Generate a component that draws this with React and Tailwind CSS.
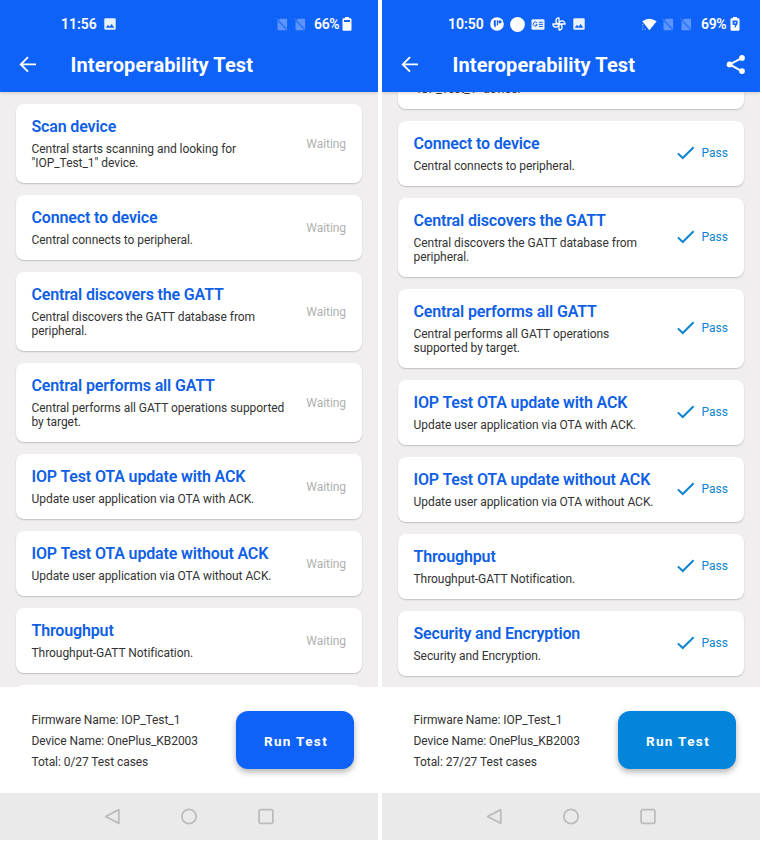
const steps = [
  ["Scan device", 'Central starts scanning and looking for "IOP_Test_1" device.'],
  ["Connect to device", "Central connects to peripheral."],
  ["Central discovers the GATT", "Central discovers the GATT database from peripheral."],
  ["Central performs all GATT", "Central performs all GATT operations supported by target."],
  ["IOP Test OTA update with ACK", "Update user application via OTA with ACK."],
  ["IOP Test OTA update without ACK", "Update user application via OTA without ACK."],
  ["Throughput", "Throughput-GATT Notification."],
  ["Security and Encryption", "Security and Encryption."],
];

function Photo({ className = "" }) {
  return (
    <svg className={"h-3 w-3 shrink-0 " + className} viewBox="0 0 12 12">
      <rect x="0.3" y="0.3" width="11.4" height="11.4" rx="1.2" fill="#e9f1ff" />
      <path d="M1.8 9.7 4 6.8l1.6 1.9L7.6 6l2.7 3.7z" fill="#0f62f7" />
    </svg>
  );
}

function NoSim({ className = "" }) {
  return (
    <svg className={"h-[13px] w-3 shrink-0 " + className} viewBox="0 0 12 13">
      <path d="M4.2.7h6.2q.7 0 .7.7v9.4L2.7 2zM1.5 3l8.9 9.3H2.2q-.7 0-.7-.7z" fill="#5c95fc" />
      <path d="M.4.6 11.6 12.4" stroke="#5c95fc" strokeWidth="0.8" />
    </svg>
  );
}

function Battery({ charging }) {
  return (
    <svg className="h-[14px] w-[10px] shrink-0" viewBox="0 0 10 14">
      <path d="M3 0h4v1.3h1.3q1.2 0 1.2 1.2v10q0 1.2-1.2 1.2H1.7Q.5 13.7.5 12.5v-10q0-1.2 1.2-1.2H3z" fill="#fff" />
      {charging ? (
        <path d="M2.4 3.6h5.2v3.2L4.8 11.5V8H2.7zM4.4 5v1.5h1.3V5z" fill="#0f62f7" fillRule="evenodd" />
      ) : (
        <path d="M2 3h6v2H2z" fill="#0f62f7" />
      )}
    </svg>
  );
}

function LeftStatus() {
  return (
    <div className="flex h-[47px] items-center pt-px pl-[61px] text-[14px] font-semibold text-white">
      <span className="w-[43px]">11:56</span>
      <Photo />
      <NoSim className="ml-[160px]" />
      <NoSim className="ml-[6px]" />
      <span className="ml-[8px] w-[28px] tracking-[-0.35px]">66%</span>
      <Battery />
    </div>
  );
}

function RightStatus() {
  return (
    <div className="flex h-[47px] items-center pt-px pl-[66px] text-[14px] font-semibold text-white">
      <span className="w-[42px]">10:50</span>
      <svg className="h-[14px] w-[14px] shrink-0" viewBox="0 0 14 14">
        <circle cx="7" cy="7" r="6.8" fill="#fff" />
        <path d="M3.8 3.2h2v7.3q-2-.6-2-3zM6.8 3.2h1.4v4.4q0 .9-1.4 1.1z" fill="#0f62f7" />
        <circle cx="10" cy="4.8" r="1.6" fill="#0f62f7" />
      </svg>
      <svg className="ml-[6px] h-[15px] w-[15px] shrink-0" viewBox="0 0 15 15">
        <circle cx="7.5" cy="7.5" r="7.4" fill="#fff" />
      </svg>
      <svg className="ml-[6px] h-[11px] w-[14px] shrink-0" viewBox="0 0 14 11">
        <rect x="0.5" y="0.3" width="13" height="10.4" rx="1.2" fill="#e9f1ff" />
        <path d="M6 4A2 2 0 1 0 6.2 5.7H4.7M8 3.3h3.8M8 5.4h3.8M8 7.5h3.8" fill="none" stroke="#0f62f7" strokeWidth="1" />
      </svg>
      <svg className="ml-[7px] h-[14px] w-[14px] shrink-0" viewBox="0 0 14 14" fill="none" stroke="#fff" strokeWidth="1.3" strokeLinejoin="round">
        <path d="M7 7V.9a3.05 3.05 0 0 0 0 6.1M7 7h6.1A3.05 3.05 0 0 0 7 7M7 7v6.1A3.05 3.05 0 0 0 7 7M7 7H.9A3.05 3.05 0 0 0 7 7" />
      </svg>
      <Photo className="ml-[7px]" />
      <svg className="ml-[55px] h-[13px] w-[17px] shrink-0" viewBox="0 0 17 13">
        <path d="M2.2 3.3Q9.4-2 16.6 3.3L9.4 12.2z" fill="#fff" />
        <path d="M2 6.5h1.3M2 9h1.3M2 11.3h1.3M4.5 11.3h1.2" stroke="#8fb5ff" strokeWidth="1" />
      </svg>
      <NoSim className="ml-[5px]" />
      <NoSim className="ml-[6px]" />
      <span className="ml-[9px] w-[29px] tracking-[-0.35px]">69%</span>
      <Battery charging />
    </div>
  );
}

function Card({ title, text, pass }) {
  return (
    <div className="flex shrink-0 items-center justify-between rounded-[8px] bg-white pt-[12px] pr-[16px] pb-[13px] pl-[15.5px] shadow-[0_1px_1.5px_rgba(0,0,0,0.2)]">
      <div className="w-[256px]">
        <div className="h-[26px] text-[16px] leading-[22px] font-semibold tracking-[-0.15px] whitespace-nowrap text-[#0f5fe6]">{title}</div>
        <div className={"text-[12px] leading-[14px] tracking-[-0.05px] text-[#333] " + (pass ? "w-[245px]" : "w-[256px]")}>{text}</div>
      </div>
      {pass ? (
        <div className="flex items-center text-[12px] leading-[14px] text-[#0d84cf]">
          <svg className="mr-[7px] h-[14px] w-[18px]" viewBox="0 0 18 14">
            <path d="M.9 7.4 5.7 12 16.6 1.3" fill="none" stroke="#0d84cf" strokeWidth="2" />
          </svg>
          <span>Pass</span>
        </div>
      ) : (
        <span className="pt-[2px] text-[12px] leading-[14px] tracking-[-0.06px] text-[#b0b0b0]">Waiting</span>
      )}
    </div>
  );
}

function Phone({ pass }) {
  return (
    <div className="flex h-[840px] w-[378px] flex-col overflow-hidden bg-[#f0eeef]">
      <header className="relative z-10 h-[92px] shrink-0 bg-[#0f62f7] shadow-[0_1px_3px_rgba(120,90,40,0.25)]">
        {pass ? <RightStatus /> : <LeftStatus />}
        <div className="flex h-[35px] items-center pl-[19px] text-white">
          <svg className="h-[18px] w-[18px] shrink-0" viewBox="0 0 18 18">
            <path d="M9 1.2 1.8 8.4 9 15.6M1.8 8.4H17" fill="none" stroke="#fff" strokeWidth="1.9" />
          </svg>
          <h1 className="ml-[33.5px] w-[273.5px] text-[20px] leading-[24px] font-bold tracking-[0.1px] whitespace-nowrap">Interoperability Test</h1>
          {pass && (
            <svg className="h-[20px] w-[20px] shrink-0" viewBox="0 0 20 20">
              <path d="M16.5 2.9 4.3 9.4l12.2 6.9" fill="none" stroke="#fff" strokeWidth="1.9" transform="translate(-.5 0)" />
              <g fill="#fff">
                <circle cx="16" cy="2.9" r="2.9" />
                <circle cx="3.6" cy="9.4" r="2.9" />
                <circle cx="16" cy="16.1" r="2.9" />
              </g>
            </svg>
          )}
        </div>
      </header>
      <main className="flex h-[595px] shrink-0 flex-col gap-[12px] overflow-hidden px-[16px]">
        {pass ? (
          <div className="h-[17px] shrink-0 rounded-b-[8px] bg-white pl-[15.5px] shadow-[0_1px_1.5px_rgba(0,0,0,0.2)]">
            <div className="-mt-[10px] text-[12px] leading-[14px] tracking-[-0.06px] text-[#333]">"IOP_Test_1" device.</div>
          </div>
        ) : (
          <div className="h-0 shrink-0" />
        )}
        {(pass ? steps.slice(1) : steps.slice(0, 7)).map(([title, text]) => (
          <Card key={title} title={title} text={text} pass={pass} />
        ))}
        {!pass && <div className="h-[65px] shrink-0 rounded-[8px] bg-white" />}
      </main>
      <footer className="flex h-[106px] shrink-0 items-center justify-between bg-white pr-[24px] pl-[31.5px]">
        <div className="pt-[2px] text-[12px] leading-[21px] tracking-[-0.07px] text-[#333]">
          <div>Firmware Name: IOP_Test_1</div>
          <div>Device Name: OnePlus_KB2003</div>
          <div>Total: {pass ? "27/27" : "0/27"} Test cases</div>
        </div>
        <button
          className={
            "h-[58px] w-[118px] rounded-[12px] pt-[2px] pl-[2px] text-[13.5px] font-bold tracking-[1.35px] text-white shadow-[0_3px_6px_rgba(0,0,0,0.3)] " +
            (pass ? "bg-[#0385dc]" : "bg-[#0f62f7]")
          }
        >
          Run Test
        </button>
      </footer>
      <nav className="flex h-[47px] shrink-0 items-center justify-center gap-[60px] bg-[#eaeaea] pr-[1px]">
        <svg className="h-[17px] w-[17px]" viewBox="-0.5 0 17 17">
          <path d="M15.3 1.6v13.8L2.1 8.5z" fill="none" stroke="#bcbcbc" strokeWidth="1.8" strokeLinejoin="round" />
        </svg>
        <svg className="h-[17px] w-[17px]" viewBox="-0.5 0 17 17">
          <circle cx="8.5" cy="8.5" r="7.1" fill="none" stroke="#bcbcbc" strokeWidth="1.8" />
        </svg>
        <svg className="h-[17px] w-[17px]" viewBox="-0.5 0 17 17">
          <rect x="1.6" y="1.6" width="13.8" height="13.8" rx="1.8" fill="none" stroke="#bcbcbc" strokeWidth="1.8" />
        </svg>
      </nav>
    </div>
  );
}

export default function App() {
  return (
    <div className="flex h-[841px] w-[762px] gap-[4px] overflow-hidden bg-white font-['Roboto',sans-serif]">
      <Phone />
      <Phone pass />
    </div>
  );
}
